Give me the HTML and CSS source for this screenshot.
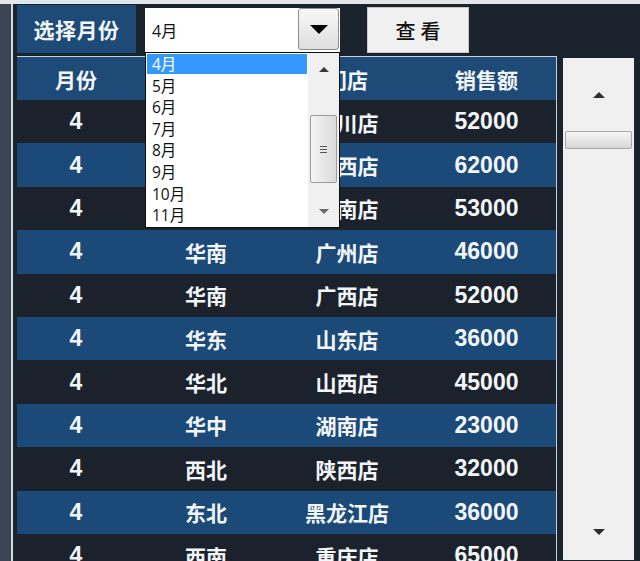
FILE: index.html
```html
<!DOCTYPE html>
<html lang="zh-CN">
<head>
<meta charset="utf-8">
<title>选择月份</title>
<link rel="stylesheet" href="styles.css">
</head>
<body>
<div class="topstrip"></div>
<div class="main">
  <div class="rail"></div>
  <div class="content">
    <div class="toolbar">
      <div class="label">选择月份</div>
      <div class="combo">
        <div class="combo-field">4月</div>
        <div class="combo-btn"><span class="tri-down-big"></span></div>
        <div class="popup">
          <ul class="list">
            <li class="sel">4月</li>
            <li>5月</li>
            <li>6月</li>
            <li>7月</li>
            <li>8月</li>
            <li>9月</li>
            <li>10月</li>
            <li>11月</li>
          </ul>
          <div class="mini-sb">
            <div class="mini-btn"><span class="tri-up-s"></span></div>
            <div class="mini-track">
              <div class="mini-thumb"><span class="grip"></span><span class="grip"></span><span class="grip"></span></div>
            </div>
            <div class="mini-btn"><span class="tri-down-s"></span></div>
          </div>
        </div>
      </div>
      <div class="view-btn">查看</div>
    </div>
    <div class="body">
      <div class="table">
        <div class="row head"><div>月份</div><div>区域</div><div>门店</div><div>销售额</div></div>
        <div class="row dark"><div class="num">4</div><div>西南</div><div>四川店</div><div class="num">52000</div></div>
        <div class="row blue"><div class="num">4</div><div>华东</div><div>江西店</div><div class="num">62000</div></div>
        <div class="row dark"><div class="num">4</div><div>西南</div><div>云南店</div><div class="num">53000</div></div>
        <div class="row blue"><div class="num">4</div><div>华南</div><div>广州店</div><div class="num">46000</div></div>
        <div class="row dark"><div class="num">4</div><div>华南</div><div>广西店</div><div class="num">52000</div></div>
        <div class="row blue"><div class="num">4</div><div>华东</div><div>山东店</div><div class="num">36000</div></div>
        <div class="row dark"><div class="num">4</div><div>华北</div><div>山西店</div><div class="num">45000</div></div>
        <div class="row blue"><div class="num">4</div><div>华中</div><div>湖南店</div><div class="num">23000</div></div>
        <div class="row dark"><div class="num">4</div><div>西北</div><div>陕西店</div><div class="num">32000</div></div>
        <div class="row blue"><div class="num">4</div><div>东北</div><div>黑龙江店</div><div class="num">36000</div></div>
        <div class="row dark"><div class="num">4</div><div>西南</div><div>重庆店</div><div class="num">65000</div></div>
      </div>
      <div class="vscroll">
        <div class="vs-up"><span class="tri-up"></span></div>
        <div class="vs-thumb"></div>
        <div class="vs-space"></div>
        <div class="vs-down"><span class="tri-down"></span></div>
      </div>
    </div>
  </div>
</div>
</body>
</html>
```
FILE: styles.css
```css
html, body {
  margin: 0;
  padding: 0;
  width: 640px;
  height: 561px;
  overflow: hidden;
}
body {
  background: #1b232d;
  font-family: "Noto Sans CJK SC", "Noto Sans", sans-serif;
}
.topstrip {
  height: 4px;
  background: #e3e7eb;
}
.main {
  display: flex;
  height: 557px;
}
.rail {
  width: 17px;
  flex: none;
  background: linear-gradient(to right, #3b4554 0, #3b4554 11px, #d3d9e0 11px, #d3d9e0 13px, #1b232d 13px);
}
.content {
  flex: 1;
  display: flex;
  flex-direction: column;
}
.toolbar {
  height: 52px;
  display: flex;
  align-items: flex-start;
  flex: none;
}
.label {
  width: 119px;
  height: 48px;
  margin-top: 1px;
  background: #1d4a77;
  color: #f3f6f9;
  font-weight: 700;
  font-size: 21px;
  display: flex;
  align-items: center;
  justify-content: center;
  letter-spacing: 0.5px;
}
.combo {
  position: relative;
  margin-left: 9px;
  margin-top: 4px;
  width: 195px;
  height: 44px;
  display: flex;
  background: #ffffff;
}
.combo-field {
  flex: 1;
  padding-left: 7px;
  display: flex;
  align-items: center;
  font-family: "Open Sans", "Noto Sans CJK SC", sans-serif;
  font-size: 16px;
  color: #111;
}
.combo-btn {
  width: 41px;
  height: 42px;
  margin: 0 1px 1px 0;
  box-sizing: border-box;
  border: 1px solid #8c8c8c;
  border-radius: 3px;
  background: linear-gradient(to bottom, #f7f7f7, #dedede);
  display: flex;
  align-items: center;
  justify-content: center;
}
.tri-down-big {
  width: 0;
  height: 0;
  border-left: 9px solid transparent;
  border-right: 9px solid transparent;
  border-top: 9px solid #050505;
}
.popup {
  position: absolute;
  top: 44px;
  left: 0;
  width: 195px;
  height: 176px;
  box-sizing: border-box;
  border: 1px solid #101010;
  background: #ffffff;
  display: flex;
  z-index: 5;
}
.list {
  list-style: none;
  margin: 0;
  padding: 1px 1px 0 1px;
  width: 160px;
}
.list li {
  height: 21.6px;
  line-height: 20px;
  padding-left: 5px;
  font-family: "Open Sans", "Noto Sans CJK SC", sans-serif;
  font-size: 15.5px;
  color: #111;
}
.list li.sel {
  background: linear-gradient(#3399ff, #3399ff) no-repeat;
  background-size: 100% 20px;
  color: #ffffff;
}
.mini-sb {
  width: 31px;
  margin-left: auto;
  background: #f0f0f0;
  display: flex;
  flex-direction: column;
}
.mini-btn {
  height: 32px;
  display: flex;
  align-items: center;
  justify-content: center;
}
.mini-track {
  flex: 1;
}
.mini-thumb {
  margin: 30px 2px 0 2px;
  height: 68px;
  box-sizing: border-box;
  border: 1px solid #9c9c9c;
  border-radius: 2px;
  background: linear-gradient(to right, #f4f4f4, #dadada);
  display: flex;
  flex-direction: column;
  align-items: center;
  justify-content: center;
  gap: 2px;
}
.grip {
  width: 7px;
  height: 1px;
  background: #555;
}
.tri-up-s {
  width: 0;
  height: 0;
  border-left: 5px solid transparent;
  border-right: 5px solid transparent;
  border-bottom: 5px solid #3a3a3a;
}
.tri-down-s {
  width: 0;
  height: 0;
  border-left: 5px solid transparent;
  border-right: 5px solid transparent;
  border-top: 5px solid #6a6a6a;
}
.view-btn {
  margin-left: 27px;
  margin-top: 3px;
  width: 102px;
  height: 46px;
  box-sizing: border-box;
  background: #f0f0f0;
  border: 1px solid #c8c8c8;
  display: flex;
  align-items: center;
  justify-content: center;
  font-size: 20px;
  font-weight: 500;
  color: #111;
  letter-spacing: 5px;
  padding-left: 5px;
}
.body {
  display: flex;
  align-items: flex-start;
}
.table {
  width: 540px;
  box-sizing: border-box;
  border-top: 1px solid #c3d1df;
  border-right: 1px solid #c3d1df;
}
.row {
  display: grid;
  grid-template-columns: 118px 142px 140px 139px;
  height: 43.4px;
  color: #f3f6f9;
  font-weight: 700;
  font-size: 21px;
}
.row > div {
  display: flex;
  align-items: center;
  justify-content: center;
}
.row.head {
  height: 43px;
  background: #1d4a77;
}
.row.dark {
  background: #1b222c;
}
.row.blue {
  background: #1c4a78;
}
.num {
  font-family: "Liberation Sans", "Noto Sans", sans-serif;
  font-size: 23px;
}
.vscroll {
  margin-left: 6px;
  margin-top: 2px;
  width: 71px;
  height: 502px;
  background: #f0f0f0;
  display: flex;
  flex-direction: column;
}
.vs-up {
  height: 73px;
  display: flex;
  align-items: center;
  justify-content: center;
}
.vs-thumb {
  height: 18px;
  margin: 0 2px;
  box-sizing: border-box;
  border: 1px solid #a8a8a8;
  border-radius: 2px;
  background: linear-gradient(to bottom, #f6f6f6, #d6d6d6);
}
.vs-space {
  flex: 1;
}
.vs-down {
  height: 56px;
  display: flex;
  align-items: center;
  justify-content: center;
}
.tri-up {
  width: 0;
  height: 0;
  border-left: 6px solid transparent;
  border-right: 6px solid transparent;
  border-bottom: 6px solid #2e2e2e;
}
.tri-down {
  width: 0;
  height: 0;
  border-left: 6px solid transparent;
  border-right: 6px solid transparent;
  border-top: 6px solid #2e2e2e;
}
```
